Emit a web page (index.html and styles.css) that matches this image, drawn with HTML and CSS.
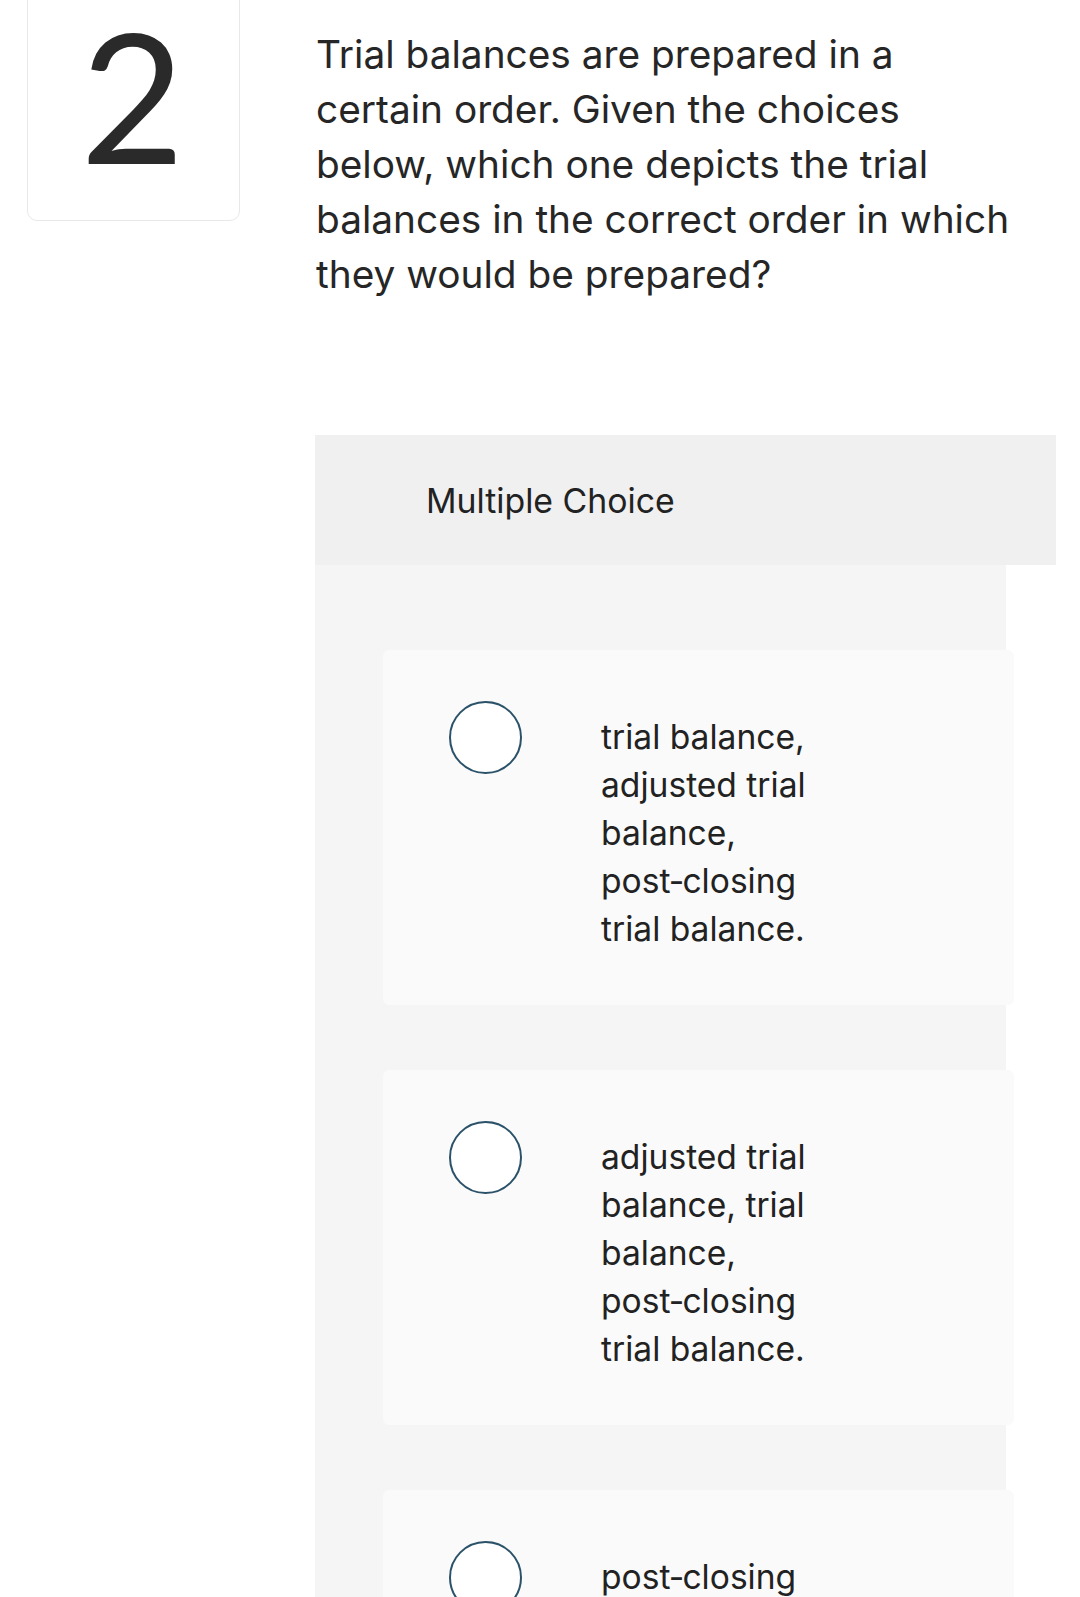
FILE: index.html
```html
<!DOCTYPE html>
<html lang="en">
<head>
<meta charset="utf-8">
<title>Question 2</title>
<link rel="stylesheet" href="styles.css">
</head>
<body>
<div class="page">
  <div class="qnum"><span>2</span></div>
  <div class="content">
    <p class="prompt">Trial balances are prepared in a certain order. Given the choices below, which one depicts the trial balances in the correct order in which they would be prepared?</p>
    <div class="mc-head">Multiple Choice</div>
    <div class="mc-panel">
      <label class="option">
        <span class="radio"></span>
        <span class="opt-text">trial balance, adjusted trial balance, post&#8209;closing trial balance.</span>
      </label>
      <label class="option">
        <span class="radio"></span>
        <span class="opt-text">adjusted trial balance, trial balance, post&#8209;closing trial balance.</span>
      </label>
      <label class="option">
        <span class="radio"></span>
        <span class="opt-text">post&#8209;closing trial balance, trial balance, adjusted trial balance.</span>
      </label>
    </div>
  </div>
</div>
</body>
</html>
```

FILE: styles.css
```css
html, body {
  margin: 0;
  padding: 0;
  background: #ffffff;
}
body {
  font-family: Inter, Lato, sans-serif;
  color: #262626;
  overflow: hidden;
  height: 1597px;
}
.page {
  display: flex;
  align-items: flex-start;
}
.qnum {
  flex: none;
  width: 211px;
  height: 239px;
  margin-left: 27px;
  margin-top: -20px;
  border: 1px solid #e8e8e8;
  border-radius: 10px;
  display: flex;
  align-items: center;
  justify-content: center;
  box-sizing: content-box;
}
.qnum span {
  font-family: Lato, sans-serif;
  font-size: 180px;
  line-height: 1;
  color: #2a2a2a;
  font-weight: 400;
  margin-top: -14px;
  margin-left: -2px;
}
.content {
  margin-left: 75px;
  flex: none;
  width: 741px;
}
.prompt {
  margin: 26px 0 0 1px;
  font-size: 38.8px;
  line-height: 55px;
  width: 695px;
}
.mc-head {
  margin-top: 134px;
  height: 130px;
  background: #f0f0f0;
  display: flex;
  align-items: center;
  padding-left: 111px;
  font-size: 33.8px;
  color: #222;
}
.mc-panel {
  width: 691px;
  background: #f5f5f5;
  padding-top: 85px;
  padding-bottom: 40px;
  display: flex;
  flex-direction: column;
  gap: 65px;
}
.option {
  margin-left: 68px;
  width: 631px;
  box-sizing: border-box;
  min-height: 355px;
  background: #fafafa;
  border-radius: 6px;
  display: flex;
  align-items: flex-start;
  padding: 51px 0 52px 66px;
}
.radio {
  flex: none;
  width: 69px;
  height: 69px;
  border: 2px solid #2b5269;
  border-radius: 50%;
  background: #fff;
}
.opt-text {
  margin-left: 79px;
  margin-top: 12px;
  width: 215px;
  font-size: 33.6px;
  line-height: 48px;
  color: #222;
}
```
